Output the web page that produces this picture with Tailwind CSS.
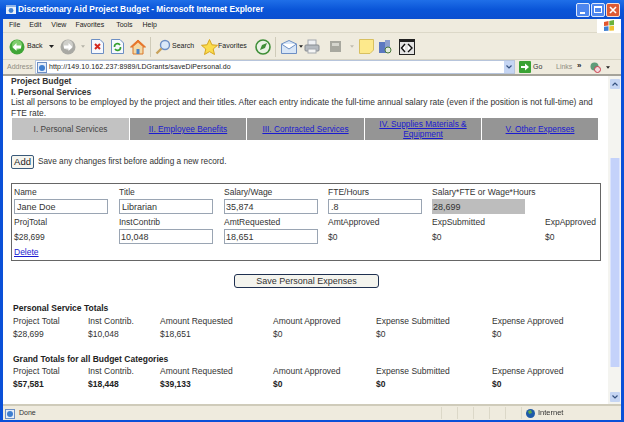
<!DOCTYPE html>
<html>
<head>
<meta charset="utf-8">
<title>Discretionary Aid Project Budget</title>
<script src="https://cdn.jsdelivr.net/npm/@tailwindcss/browser@4"></script>
</head>
<body class="m-0 bg-[#0a50d8]">
<div class="w-[624px] h-[422px] overflow-hidden flex flex-col font-['Liberation_Sans',Arial,sans-serif] text-[#333] blur-[0.35px]">

  <!-- Title bar -->
  <div class="h-[19px] flex items-center pl-[6px] pr-[4px] bg-gradient-to-b from-[#1f6fe8] via-[#0a55d8] to-[#0b4fd0]">
    <svg width="11" height="11" viewBox="0 0 11 11" class="mr-[1px]"><rect x="0" y="1" width="10" height="9" fill="#e8f0fa"/><rect x="0" y="1" width="10" height="2" fill="#8fb4e8"/><circle cx="5" cy="6.5" r="2.4" fill="#3f7fd0"/></svg>
    <span class="text-[8.4px] font-bold text-white whitespace-nowrap">Discretionary Aid Project Budget - Microsoft Internet Explorer</span>
    <div class="ml-auto flex gap-[1px]">
      <div class="w-[14px] h-[14px] rounded-[2px] bg-[#4d86ee] border border-[#dfe9fb] flex items-end pl-[3px] pb-[2px]"><div class="w-[5px] h-[2px] bg-white"></div></div>
      <div class="w-[14px] h-[14px] rounded-[2px] bg-[#4d86ee] border border-[#dfe9fb] flex items-center justify-center"><div class="w-[8px] h-[7px] border border-white border-t-2"></div></div>
      <div class="w-[14px] h-[14px] rounded-[2px] bg-[#dd5a34] border border-[#f4dfd8] flex items-center justify-center">
        <svg width="8" height="8" viewBox="0 0 8 8"><path d="M1 1L7 7M7 1L1 7" stroke="#fff" stroke-width="1.6"/></svg>
      </div>
    </div>
  </div>

  <div class="flex-1 flex flex-col mx-[3px] bg-[#efebde] min-h-0">
    <!-- Menu -->
    <div class="h-[14px] flex items-center text-[7px] text-[#222] relative border-b border-[#dcd8c8]">
      <span class="ml-[6px]">File</span><span class="ml-[9px]">Edit</span><span class="ml-[10px]">View</span><span class="ml-[9px]">Favorites</span><span class="ml-[12px]">Tools</span><span class="ml-[10px]">Help</span>
      <div class="ml-auto w-[24px] h-[14px] bg-white flex items-center justify-center">
        <svg width="12" height="12" viewBox="0 0 12 12"><path d="M1 2L5.5 1V5.5L1 6Z" fill="#e2562d"/><path d="M6.3 1L11 0V5L6.3 5.5Z" fill="#6ab33d"/><path d="M1 6.7L5.5 6.2V10.8L1 11Z" fill="#3f7fd0"/><path d="M6.3 6.2L11 5.8V10.4L6.3 10.8Z" fill="#f1c232"/></svg>
      </div>
    </div>

    <!-- Toolbar -->
    <div class="h-[27px] flex items-center text-[7px] text-[#222] pl-[6px] pt-[1px] border-b border-[#d8d4c4]">
      <svg width="16" height="16" viewBox="0 0 16 16"><circle cx="8" cy="8" r="7.5" fill="#3fa536"/><circle cx="8" cy="6" r="5" fill="#7fce6c"/><path d="M3.5 8L7.5 4V6.5H12V9.5H7.5V12Z" fill="#fff"/></svg>
      <span class="ml-[2px] w-[14px]">Back</span>
      <svg width="5" height="3" viewBox="0 0 5 3" class="ml-[8px]"><path d="M0 0H5L2.5 3Z" fill="#222"/></svg>
      <svg width="16" height="16" viewBox="0 0 16 16" class="ml-[6px]"><circle cx="8" cy="8" r="7.5" fill="#a9a9a4"/><circle cx="8" cy="6" r="5" fill="#cfcfca"/><path d="M12.5 8L8.5 4V6.5H4V9.5H8.5V12Z" fill="#fff"/></svg>
      <svg width="4" height="3" viewBox="0 0 5 3" class="ml-[5px]"><path d="M0 0H5L2.5 3Z" fill="#b5b3a8"/></svg>
      <svg width="13" height="15" viewBox="0 0 13 15" class="ml-[6px]"><path d="M.5.5H9L12.5 4V14.5H.5Z" fill="#f6f8fd" stroke="#6d8fc4"/><path d="M4 5L9 10M9 5L4 10" stroke="#d5281e" stroke-width="2"/></svg>
      <svg width="13" height="15" viewBox="0 0 13 15" class="ml-[7px]"><path d="M.5.5H9L12.5 4V14.5H.5Z" fill="#f6f8fd" stroke="#6d8fc4"/><path d="M3.5 8A3 3 0 0 1 9 6M9.5 8A3 3 0 0 1 4 10" stroke="#35a02e" stroke-width="1.6" fill="none"/></svg>
      <svg width="16" height="16" viewBox="0 0 16 16" class="ml-[6px]"><path d="M8 1L15.5 8H13V15H3V8H.5Z" fill="#f3d9a6" stroke="#d9762a"/><path d="M8 1L15.5 8H13L8 3.5L3 8H.5Z" fill="#e8742a"/><rect x="6.5" y="10" width="3" height="5" fill="#4d86c8"/></svg>
      <div class="w-[1px] h-[20px] bg-[#cfcbb9] ml-[4px]"></div>
      <svg width="16" height="16" viewBox="0 0 16 16" class="ml-[4px]"><circle cx="10" cy="6" r="4.5" fill="#dbe9f8" stroke="#6d8fc4" stroke-width="1.4"/><path d="M6.5 9.5L1.5 14.5" stroke="#c9a25a" stroke-width="2.4"/></svg>
      <span class="ml-[1px] w-[21px]">Search</span>
      <svg width="17" height="16" viewBox="0 0 17 16" class="ml-[8px]"><path d="M8.5 .5L10.9 5.8L16.5 6.3L12.2 10L13.5 15.5L8.5 12.6L3.5 15.5L4.8 10L.5 6.3L6.1 5.8Z" fill="#fbdc4c" stroke="#d6a521"/></svg>
      <span class="w-[29px]">Favorites</span>
      <svg width="16" height="16" viewBox="0 0 16 16" class="ml-[8px]"><circle cx="8" cy="8" r="7" fill="#e9f2e4" stroke="#3f8f38" stroke-width="1.6"/><path d="M5 11L7 6L12 4L10 9Z" fill="#3f8f38"/></svg>
      <div class="w-[1px] h-[20px] bg-[#cfcbb9] ml-[4px]"></div>
      <svg width="16" height="14" viewBox="0 0 16 14" class="ml-[5px]"><path d="M.5 4L8 .5L15.5 4V13.5H.5Z" fill="#d8e6f7" stroke="#6d8fc4"/><path d="M.5 4L8 9L15.5 4" fill="#fff" stroke="#6d8fc4"/></svg>
      <svg width="4" height="3" viewBox="0 0 5 3" class="ml-[2px]"><path d="M0 0H5L2.5 3Z" fill="#222"/></svg>
      <svg width="16" height="15" viewBox="0 0 16 15" class="ml-[1px]"><rect x="4" y="1" width="8" height="6" fill="#eef0f3" stroke="#a3a8ad"/><rect x="1" y="6" width="14" height="6" rx="1" fill="#b5bac0" stroke="#868b90"/><rect x="4" y="10" width="8" height="4" fill="#f5f5f5" stroke="#a3a8ad"/></svg>
      <svg width="11" height="11" viewBox="0 0 11 11" class="ml-[10px]"><rect width="11" height="11" fill="#a8a89f"/><rect x="2" y="2" width="7" height="3" fill="#d6d6ce"/></svg>
      <svg width="4" height="3" viewBox="0 0 5 3" class="ml-[9px]"><path d="M0 0H5L2.5 3Z" fill="#c0bdb0"/></svg>
      <svg width="15" height="15" viewBox="0 0 15 15" class="ml-[5px]"><path d="M.5.5H14.5V11L11 14.5H.5Z" fill="#fde98c" stroke="#d8c060"/></svg>
      <svg width="15" height="15" viewBox="0 0 15 15" class="ml-[4px]"><rect x="1" y="3" width="7" height="11" fill="#5c78c0"/><rect x="7" y="1" width="5" height="9" fill="#8d9fcd"/><circle cx="10" cy="11" r="3" fill="#e4ebdc" stroke="#4a7a3c"/></svg>
      <svg width="16" height="16" viewBox="0 0 16 16" class="ml-[6px]"><rect x=".5" y=".5" width="15" height="15" fill="#e4e4e4" stroke="#222"/><rect x="1" y="1" width="14" height="2" fill="#222"/><path d="M6 5L2.5 9L6 13M9 5L13 9L9 13" fill="#fff" stroke="#111" stroke-width="1.4"/></svg>
    </div>

    <!-- Address -->
    <div class="h-[14px] flex items-center text-[7px] pl-[4px]">
      <span class="text-[#8f8d82] w-[28px]">Address</span>
      <div class="w-[480px] h-[14px] bg-white border border-[#b7c5dc] flex items-center pl-[1px] text-[#222] shrink-0">
        <svg width="11" height="11" viewBox="0 0 11 11" class="mr-[1px]"><rect x=".5" y=".5" width="9" height="10" fill="#e6eefa" stroke="#6d8fc4"/><circle cx="5" cy="6" r="3" fill="#3f7fd0"/></svg>
        <span class="tracking-[0.015em] whitespace-nowrap">http://149.10.162.237:8989/LDGrants/saveDiPersonal.do</span>
        <div class="ml-auto w-[10px] h-[12px] bg-[#c5d5f3] flex items-center justify-center">
          <svg width="6" height="4" viewBox="0 0 6 4"><path d="M.5.5L3 3L5.5.5" stroke="#35517f" stroke-width="1.2" fill="none"/></svg>
        </div>
      </div>
      <svg width="12" height="12" viewBox="0 0 12 12" class="ml-[4px]"><rect width="12" height="12" rx="1" fill="#3aa234"/><path d="M2 5H6V2.5L10 6L6 9.5V7H2Z" fill="#fff"/></svg>
      <span class="ml-[2px] w-[9px] text-[#333]">Go</span>
      <span class="ml-[14px] w-[16px] text-[#8f8d82]">Links</span>
      <span class="ml-[5px] text-[#222] font-bold text-[8px] leading-none mb-[3px]">»</span>
      <svg width="11" height="11" viewBox="0 0 11 11" class="ml-[9px]"><circle cx="4.5" cy="4.5" r="4" fill="#5f9c79"/><circle cx="7.5" cy="7.5" r="3" fill="#f3d9dd" stroke="#c83a4a"/></svg>
      <svg width="4" height="3" viewBox="0 0 5 3" class="ml-[5px]"><path d="M0 0H5L2.5 3Z" fill="#222"/></svg>
    </div>
    <div class="h-[2px] bg-[#a5a39a]"></div>

    <!-- Page + scrollbar -->
    <div class="flex-1 flex bg-white min-h-0">
      <div class="flex-1 min-w-0 pl-[8px] text-[8.3px] leading-[10.5px]">
        <div class="font-bold text-[8.5px]">Project Budget</div>
        <div class="font-bold text-[8.5px]">I. Personal Services</div>
        <div class="w-[590px] text-[8.42px]">List all persons to be employed by the project and their titles. After each entry indicate the full-time annual salary rate (even if the position is not full-time) and FTE rate.</div>

        <!-- Tabs -->
        <div class="ml-[1px] w-[589px] h-[22px] grid grid-cols-[117px_116px_117px_116px_116px] gap-x-[1px] text-center">
          <div class="bg-[#c2c2c2] flex items-center justify-center text-[#444]">I. Personal Services</div>
          <a href="#" class="bg-[#959595] flex items-center justify-center text-[#1a1ad0] underline">II. Employee Benefits</a>
          <a href="#" class="bg-[#959595] flex items-center justify-center text-[#1a1ad0] underline">III. Contracted Services</a>
          <a href="#" class="bg-[#959595] flex items-center justify-center text-[#1a1ad0] underline px-[8px]">IV. Supplies Materials &amp; Equipment</a>
          <a href="#" class="bg-[#959595] flex items-center justify-center text-[#1a1ad0] underline">V. Other Expenses</a>
        </div>

        <!-- Add -->
        <div class="mt-[15px] flex items-center h-[14px]">
          <button class="w-[23px] h-[14px] border border-[#3a5a7a] rounded-[2px] bg-[#f6f6f0] text-[9.5px] text-[#222] leading-none p-0">Add</button>
          <span class="ml-[4px] mt-[1px] text-[8.25px]">Save any changes first before adding a new record.</span>
        </div>

        <!-- Record -->
        <div class="mt-[14px] w-[590px] h-[78px] border border-[#666] pl-[2px] pt-[3px] text-[8.5px] leading-[10px]">
          <div class="grid grid-cols-[105px_105px_104px_104px_113px_1fr] grid-rows-[10px_15px_17px_15px]">
            <div>Name</div><div>Title</div><div>Salary/Wage</div><div>FTE/Hours</div><div>Salary*FTE or Wage*Hours</div><div></div>
            <input value="Jane Doe" class="w-[94px] h-[15px] border border-[#9aa5b3] px-[2px] text-[9px] mt-[2px] outline-none">
            <input value="Librarian" class="w-[94px] h-[15px] border border-[#9aa5b3] px-[2px] text-[9px] mt-[2px] outline-none">
            <input value="35,874" class="w-[94px] h-[15px] border border-[#9aa5b3] px-[1px] text-[9px] mt-[2px] outline-none">
            <input value=".8" class="w-[94px] h-[15px] border border-[#9aa5b3] px-[2px] text-[9px] mt-[2px] outline-none">
            <input value="28,699" class="w-[93px] h-[15px] bg-[#bdbdbd] px-[1px] text-[9px] mt-[2px] outline-none">
            <div></div>
            <div class="pt-[5px]">ProjTotal</div><div class="pt-[5px]">InstContrib</div><div class="pt-[5px]">AmtRequested</div><div class="pt-[5px]">AmtApproved</div><div class="pt-[5px]">ExpSubmitted</div><div class="pt-[5px]">ExpApproved</div>
            <div class="flex items-center">$28,699</div>
            <input value="10,048" class="w-[94px] h-[15px] border border-[#9aa5b3] px-[1px] text-[9px] outline-none">
            <input value="18,651" class="w-[94px] h-[15px] border border-[#9aa5b3] px-[1px] text-[9px] outline-none">
            <div class="flex items-center">$0</div><div class="flex items-center">$0</div><div class="flex items-center">$0</div>
          </div>
          <a href="#" class="block mt-[3px] text-[#1a1ad0] underline">Delete</a>
        </div>

        <!-- Save -->
        <div class="mt-[13px] ml-[223px]">
          <button class="block w-[145px] h-[14px] border-[1.5px] border-[#1f3050] rounded-[3px] bg-[#f4f4ee] text-[9px] leading-none text-[#333] p-0">Save Personal Expenses</button>
        </div>

        <!-- Totals -->
        <div class="mt-[14px] ml-[2px] text-[8.5px] leading-[13px]">
          <div class="font-bold text-[#222]">Personal Service Totals</div>
          <div class="grid grid-cols-[75px_72px_113px_103px_116px_1fr]">
            <div>Project Total</div><div>Inst Contrib.</div><div>Amount Requested</div><div>Amount Approved</div><div>Expense Submitted</div><div>Expense Approved</div>
            <div>$28,699</div><div>$10,048</div><div>$18,651</div><div>$0</div><div>$0</div><div>$0</div>
          </div>
          <div class="font-bold text-[#222] mt-[12px]">Grand Totals for all Budget Categories</div>
          <div class="grid grid-cols-[75px_72px_113px_103px_116px_1fr] mt-[-1px]">
            <div>Project Total</div><div>Inst Contrib.</div><div>Amount Requested</div><div>Amount Approved</div><div>Expense Submitted</div><div>Expense Approved</div>
            <div class="font-bold text-[#222]">$57,581</div><div class="font-bold text-[#222]">$18,448</div><div class="font-bold text-[#222]">$39,133</div><div class="font-bold text-[#222]">$0</div><div class="font-bold text-[#222]">$0</div><div class="font-bold text-[#222]">$0</div>
          </div>
        </div>
      </div>

      <!-- Scrollbar -->
      <div class="w-[13px] shrink-0 flex flex-col bg-[#f4f4f0] pr-[1px] pl-[2px]">
        <div class="h-[10px] mt-[3px] bg-[#c5d5f3] rounded-[1px] flex items-center justify-center"><svg width="6" height="4" viewBox="0 0 6 4"><path d="M.5 3.5L3 1L5.5 3.5" stroke="#35517f" stroke-width="1.2" fill="none"/></svg></div>
        <div class="h-[69px]"></div>
        <div class="h-[209px] bg-[#c4d2fa] rounded-[1px] border-x border-[#dbe4fc]"></div>
        <div class="flex-1"></div>
        <div class="h-[10px] mb-[2px] bg-[#c5d5f3] rounded-[1px] flex items-center justify-center"><svg width="6" height="4" viewBox="0 0 6 4"><path d="M.5.5L3 3L5.5.5" stroke="#35517f" stroke-width="1.2" fill="none"/></svg></div>
      </div>
    </div>

    <!-- Status bar -->
    <div class="h-[16px] shrink-0 flex items-center border-t-2 border-[#cfcbba] text-[7px] pl-[2px]">
      <svg width="11" height="11" viewBox="0 0 11 11"><rect x=".5" y="1.5" width="9" height="9" fill="#e6eefa" stroke="#6d8fc4"/><circle cx="5" cy="6" r="3" fill="#3f7fd0"/></svg>
      <span class="ml-[3px] w-[16px]">Done</span>
      <div class="ml-[406px] flex gap-[15px]">
        <div class="w-[1px] h-[12px] bg-[#dcd8c8]"></div><div class="w-[1px] h-[12px] bg-[#dcd8c8]"></div><div class="w-[1px] h-[12px] bg-[#dcd8c8]"></div><div class="w-[1px] h-[12px] bg-[#dcd8c8]"></div><div class="w-[1px] h-[12px] bg-[#dcd8c8]"></div><div class="w-[1px] h-[12px] bg-[#dcd8c8]"></div>
      </div>
      <svg width="9" height="9" viewBox="0 0 9 9" class="ml-[4px]"><circle cx="4.5" cy="4.5" r="4.5" fill="#1e5aa8"/><path d="M2 2L5 1L6 4L3 5Z" fill="#5fa84c"/></svg>
      <span class="ml-[3px] text-[7.5px]">Internet</span>
    </div>
  </div>
  <div class="h-[2px] shrink-0 bg-[#0a50d8]"></div>
</div>
</body>
</html>
